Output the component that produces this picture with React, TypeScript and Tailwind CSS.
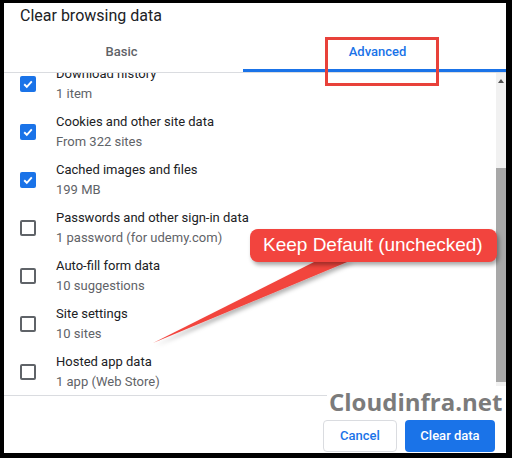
import React from 'react';

type Item = { title: string; sub: string; checked: boolean };

const items: Item[] = [
  { title: 'Download history', sub: '1 item', checked: true },
  { title: 'Cookies and other site data', sub: 'From 322 sites', checked: true },
  { title: 'Cached images and files', sub: '199 MB', checked: true },
  { title: 'Passwords and other sign-in data', sub: '1 password (for udemy.com)', checked: false },
  { title: 'Auto-fill form data', sub: '10 suggestions', checked: false },
  { title: 'Site settings', sub: '10 sites', checked: false },
  { title: 'Hosted app data', sub: '1 app (Web Store)', checked: false },
];

const Checkbox: React.FC<{ checked: boolean }> = ({ checked }) =>
  checked ? (
    <div className="w-4 h-4 rounded-[2px] bg-[#1a73e8] flex items-center justify-center shrink-0">
      <svg width="12" height="12" viewBox="0 0 12 12">
        <path d="M2.2 6.3 L4.8 8.8 L9.8 3.4" fill="none" stroke="#fff" strokeWidth="1.9" />
      </svg>
    </div>
  ) : (
    <div className="w-4 h-4 rounded-[2px] border-2 border-[#5f6368] shrink-0" />
  );

const App: React.FC = () => {
  return (
    <div className="w-[512px] h-[458px] bg-black pt-[3px] pl-[4px] font-['Roboto',sans-serif]">
      <div className="relative w-[502px] h-[450px] bg-white flex flex-col overflow-hidden">
        <div className="h-[29px] pl-[16px] pt-[3px] text-[16px] leading-[20px] text-[#202124]">
          Clear browsing data
        </div>

        <div className="flex h-[41px] border-b border-[#dadce0]">
          <div className="w-[239px] flex items-center justify-center pr-[4px] text-[13px] font-medium text-[#5f6368]">
            Basic
          </div>
          <div className="relative flex-1 flex items-center justify-center pl-[6px] text-[13px] font-medium text-[#1a73e8]">
            Advanced
            <div className="absolute left-0 right-0 bottom-0 h-[3px] bg-[#1a73e8]" />
          </div>
        </div>

        <div className="flex h-[322px] overflow-hidden">
          <div className="flex-1 overflow-hidden">
            <div className="-mt-[13px]">
              {items.map((it) => (
                <div key={it.title} className="flex items-center h-[48px] pl-[16px]">
                  <Checkbox checked={it.checked} />
                  <div className="ml-[20px]">
                    <div className="text-[13px] leading-[20px] text-[#202124]">{it.title}</div>
                    <div className="text-[13px] leading-[20px] text-[#5f6368]">{it.sub}</div>
                  </div>
                </div>
              ))}
            </div>
          </div>
          <div className="w-[10px] bg-[#f1f1f1] flex flex-col items-center">
            <div className="h-[14px] flex items-center justify-center pt-[2px]">
              <div className="w-0 h-0 border-l-[3px] border-r-[3px] border-b-[4px] border-l-transparent border-r-transparent border-b-[#505050]" />
            </div>
            <div className="h-[81px]" />
            <div className="w-[10px] h-[214px] bg-[#a8a8a8]" />
          </div>
        </div>

        <div className="flex-1 border-t border-[#dadce0] flex justify-end gap-[8px] pr-[11px] pt-[24px]">
          <button className="w-[74px] h-[32px] rounded-[4px] border border-[#dadce0] bg-white text-[13px] font-medium text-[#1a73e8]">
            Cancel
          </button>
          <button className="w-[90px] h-[32px] rounded-[4px] bg-[#1a73e8] text-[13px] font-medium text-white">
            Clear data
          </button>
        </div>

        {/* annotation: highlight on Advanced tab */}
        <div className="absolute left-[321px] top-[34px] w-[114px] h-[49px] border-[3px] border-[#e8413a]" />

        {/* annotation: callout tail */}
        <svg className="absolute left-[136px] top-[252px]" width="230" height="100" viewBox="0 0 230 100">
          <defs>
            <filter id="sh" x="-20%" y="-20%" width="140%" height="160%">
              <feDropShadow dx="2" dy="3" stdDeviation="2" floodColor="#000" floodOpacity="0.3" />
            </filter>
          </defs>
          <polygon points="178,5 212,5 13,88" fill="#f2443e" filter="url(#sh)" />
        </svg>

        {/* annotation: callout */}
        <div className="absolute left-[246px] top-[226px] w-[247px] h-[33px] rounded-[8px] bg-[#f2443e] shadow-[2px_3px_4px_rgba(0,0,0,0.35)] flex items-center pl-[13px] text-[19px] text-white font-['Liberation_Sans',sans-serif]">
          Keep Default (unchecked)
        </div>

        {/* watermark */}
        <div className="absolute left-[323px] top-[383px] right-0 h-[32px] bg-white pl-[2px] text-[24px] leading-[32px] font-bold text-[#7b7b7b] font-['Open_Sans',sans-serif]">
          Cloudinfra.net
        </div>
      </div>
    </div>
  );
};

export default App;
